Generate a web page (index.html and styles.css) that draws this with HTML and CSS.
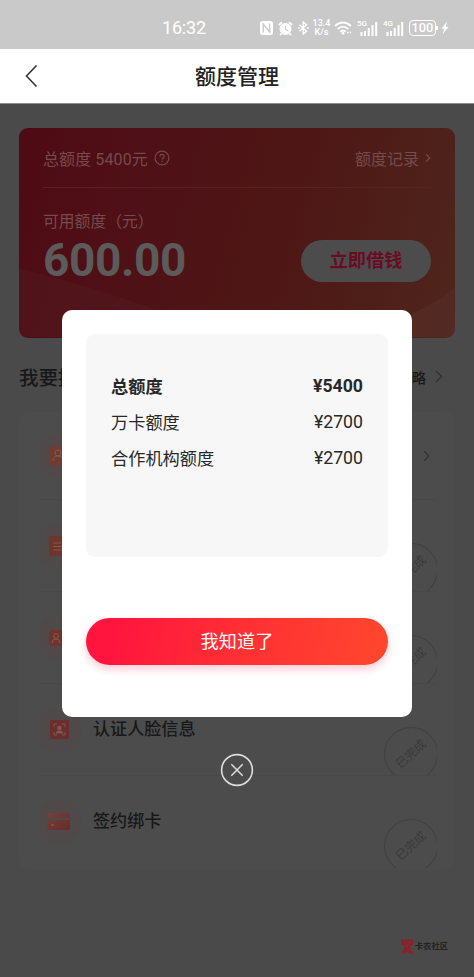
FILE: index.html
```html
<!DOCTYPE html>
<html lang="zh-CN">
<head>
<meta charset="utf-8">
<title>额度管理</title>
<link rel="stylesheet" href="styles.css">
</head>
<body>
<div class="phone">
  <div class="status">
    <span class="clock">16:32</span>
    <svg class="s-nfc" width="13" height="14" viewBox="0 0 13 14"><rect width="13" height="14" rx="2.5" fill="#fff"/><path d="M3.2 11.5V3l6.4 8V2.5" fill="none" stroke="#c9c9c9" stroke-width="1.4"/></svg>
    <svg class="s-alarm" width="15" height="15" viewBox="0 0 15 15"><circle cx="7.5" cy="8" r="6" fill="#fff"/><path d="M.8 4 4 1.2M14.2 4 11 1.2M3.5 12.5 2 14.2M11.5 12.5l1.5 1.7" stroke="#fff" stroke-width="1.8"/><path d="M7.5 4.5V8.5l2.6 1.3" fill="none" stroke="#c9c9c9" stroke-width="1.2"/></svg>
    <svg class="s-bt" width="11" height="14" viewBox="0 0 11 14"><path d="m1.5 3.8 7 6.4-3.3 2.8V1l3.3 2.8-7 6.4M.2 7h1.6M9 7h1.8" fill="none" stroke="#fff" stroke-width="1.4"/></svg>
    <span class="speed"><span>13.4</span><span>K/s</span></span>
    <svg class="s-wifi" width="18" height="14" viewBox="0 0 18 14"><path d="M1 5Q9-2 17 5M3.7 8Q9 3.4 14.3 8M6.2 10.8Q9 8.4 11.8 10.8" fill="none" stroke="#fff" stroke-width="1.7"/><circle cx="9" cy="12.3" r="1.4" fill="#fff"/><path d="M13 11.5h1.4M15.8 11.5h1.4" stroke="#fff" stroke-width="1.6"/></svg>
    <span class="signal"><b>5G</b><svg width="21" height="15" viewBox="0 0 21 15"><path d="M4.5 11v4M8 10v5M11.7 7v8M15.5 4v11M19.2 1v14" stroke="#fff" stroke-width="2"/></svg></span>
    <span class="signal"><b>4G</b><svg width="21" height="15" viewBox="0 0 21 15"><path d="M4.5 11v4M8 10v5M11.7 7v8M15.5 4v11M19.2 1v14" stroke="#fff" stroke-width="2"/></svg></span>
    <span class="battery">100</span><i class="cap"></i>
    <svg class="s-bolt" width="8" height="14" viewBox="0 0 8 14"><path d="M6 .5.5 7.8h2.7L1.5 13.5 7.7 5.8H4.8z" fill="#fff"/></svg>
  </div>
  <header class="nav">
    <svg class="back" width="13" height="24" viewBox="0 0 13 24"><path d="M11.5 1.5 1.5 12l10 10.5" fill="none" stroke="#303030" stroke-width="1.5"/></svg>
    <h1>额度管理</h1>
  </header>

  <main class="page">
    <section class="card">
      <svg class="wave" width="437" height="209" viewBox="0 0 437 209"><path d="M0 140 Q70 158 130 179 L220 209H0z" fill="#551d22" opacity=".4"/><path d="M290 209Q390 200 437 158V209z" fill="#58302a" opacity=".5"/></svg>
      <div class="card-top">
        <span class="total">总额度 5400元</span>
        <svg class="help" width="16" height="16" viewBox="0 0 16 16"><circle cx="8" cy="8" r="6.9" fill="none" stroke="#754b4e" stroke-width="1.1"/><path d="M5.9 6.5c0-2.8 4.3-2.8 4.3-.1 0 1.5-2.1 1.6-2.1 3.2M8.1 10.8v1.3" fill="none" stroke="#754b4e" stroke-width="1.2"/></svg>
        <span class="record">额度记录</span>
        <svg width="6" height="10" viewBox="0 0 6 10"><path d="m1 1.2 3.8 3.8L1 8.8" fill="none" stroke="#754b4b" stroke-width="1.2"/></svg>
      </div>
      <div class="card-main">
        <div>
          <p class="label">可用额度（元）</p>
          <p class="amount">600.00</p>
        </div>
        <span class="borrow">立即借钱</span>
      </div>
    </section>

    <div class="section-head">
      <h2>我要提额</h2>
      <span class="guide">攻略</span>
      <svg width="8" height="13" viewBox="0 0 8 13"><path d="m1 1 5.7 5.5L1 12" fill="none" stroke="#303030" stroke-width="1.2"/></svg>
    </div>

    <ul class="list">
      <li class="first">
        <span class="ico"><svg width="20" height="20" viewBox="0 0 20 20"><rect width="20" height="20" rx="3" fill="#713a32"/><circle cx="9" cy="7" r="3" fill="none" stroke="#805b54"/><path d="M4 15q0-5 5-5t5 5" fill="none" stroke="#805b54"/></svg></span>
        <svg class="go" width="7" height="12" viewBox="0 0 7 12"><path d="m1 1 5 5-5 5" fill="none" stroke="#343434" stroke-width="1.2"/></svg>
      </li>
      <li>
        <span class="ico"><svg width="20" height="20" viewBox="0 0 20 20"><rect width="20" height="20" rx="3" fill="#70332e"/><path d="M4 7h8M4 10.5h12M4 14h9" stroke="#805b54" stroke-width="1.2"/></svg></span>
        <span class="stamp">已完成</span>
      </li>
      <li>
        <span class="ico"><svg width="20" height="16" viewBox="0 0 20 16"><rect width="20" height="16" rx="2" fill="#70332e"/><circle cx="7" cy="6" r="2.4" fill="none" stroke="#805b54"/><path d="M3 13q0-4 4-4t4 4" fill="none" stroke="#805b54"/></svg></span>
        <span class="stamp">已完成</span>
      </li>
      <li>
        <span class="ico"><svg width="19" height="19" viewBox="0 0 19 19"><rect width="19" height="19" rx="2" fill="#6a2f2d"/><path d="M4 7V4h3M12 4h3v3M4 12v3h3M12 15h3v-3" fill="none" stroke="#805652"/><circle cx="9.5" cy="8" r="2.3" fill="#805652"/><path d="M5.8 13.5q0-3 3.7-3t3.7 3z" fill="#805652"/></svg></span>
        <span class="name">认证人脸信息</span>
        <span class="stamp">已完成</span>
      </li>
      <li>
        <span class="ico"><svg width="24" height="18" viewBox="0 0 24 18"><defs><linearGradient id="cc" x1="0" y1="0" x2="1" y2="1"><stop offset="0" stop-color="#734238"/><stop offset="1" stop-color="#6a292c"/></linearGradient></defs><path d="M0 5V3q0-3 3-3h18q2 0 2 3v2zM0 7h23v8q0 2-2 2H3q-3 0-3-3z" fill="url(#cc)"/><path d="M4 12h3" stroke="#8a655d"/></svg></span>
        <span class="name">签约绑卡</span>
        <span class="stamp">已完成</span>
      </li>
    </ul>

    <div class="brand">
      <svg width="14" height="15" viewBox="0 0 14 15"><path d="M1 .5h12V6h-1.6L9.5 8l4 6.5H8.8L7 12.4l-1.8 2.1H1L4.8 8 2.6 6H1z" fill="#8d2029"/><path d="M3.5 2.6h2.2v1H3.5zM8.3 2.6h2.2v1H8.3zM6.5 6h1.2v2.4H6.5z" fill="#4a4a4a"/></svg>
      <span>卡农社区</span>
    </div>
  </main>

  <div class="modal">
    <div class="box">
      <div class="line strong"><span>总额度</span><span class="money">¥5400</span></div>
      <div class="line"><span>万卡额度</span><span class="money">¥2700</span></div>
      <div class="line"><span>合作机构额度</span><span class="money">¥2700</span></div>
    </div>
    <button class="ok">我知道了</button>
  </div>
  <svg class="close" width="34" height="34" viewBox="0 0 34 34"><circle cx="17" cy="17" r="15.4" fill="none" stroke="#dedede" stroke-width="1.6"/><path d="m11.3 11.3 11.4 11.4M22.7 11.3 11.3 22.7" stroke="#dedede" stroke-width="1.5"/></svg>
</div>
</body>
</html>
```
FILE: styles.css
```css
* { box-sizing: border-box; margin: 0; padding: 0; }
body {
  width: 474px;
  height: 977px;
  overflow: hidden;
  background: #4a4a4a;
  font-family: Roboto, "Noto Sans CJK SC", sans-serif;
}
.phone { position: relative; height: 977px; display: flex; flex-direction: column; }

.status {
  height: 49px;
  flex: none;
  background: #c9c9c9;
  color: #fff;
  display: flex;
  align-items: center;
  padding: 7px 0 0 162px;
}
.clock { width: 98px; font-size: 18px; line-height: 20px; letter-spacing: -.2px; }
.s-alarm { margin-left: 5px; }
.s-bt { margin-left: 5px; }
.speed {
  width: 19px;
  margin-left: 3px;
  display: flex;
  flex-direction: column;
  align-items: center;
  font: 500 9px/9px Roboto, sans-serif;
}
.s-wifi { margin-left: 3px; }
.signal { position: relative; width: 21px; height: 15px; margin-left: 5px; }
.signal svg { display: block; }
.signal b { position: absolute; left: 0; top: -1px; font: 500 8px/8px Roboto, sans-serif; }
.battery {
  width: 27px;
  height: 16px;
  margin-left: 5px;
  border: 1px solid #fff;
  border-radius: 4px;
  text-align: center;
  font: 500 12.8px/14px Roboto, sans-serif;
}
.cap { width: 2px; height: 4px; background: #fff; margin-right: 3px; }

.nav {
  height: 55px;
  flex: none;
  background: #fff;
  border-bottom: 1px solid #8c8c8c;
  display: flex;
  align-items: center;
  padding-left: 25px;
}
.nav h1 { margin: 2px 0 0 157px; font-size: 21px; line-height: 30px; font-weight: 500; color: #222; }

.page { flex: 1; padding: 24px 19px 0; }
.card {
  position: relative;
  height: 210px;
  border-radius: 9px;
  background: linear-gradient(105deg, #4f0a14 0%, #4e1216 35%, #4e1715 60%, #4e261c 100%);
  padding: 0 24px;
  color: #754b4d;
  overflow: hidden;
}
.wave { position: absolute; left: 0; top: 0; }
.card-top {
  position: relative;
  height: 60px;
  display: flex;
  align-items: center;
  border-bottom: 1px solid #572222;
  font-size: 16px;
}
.total { letter-spacing: .1px; }
.help { margin-left: 6px; }
.record { margin-left: auto; margin-right: 6px; }
.card-main { position: relative; display: flex; justify-content: space-between; }
.label { margin-top: 22px; font-size: 15.8px; line-height: 24px; }
.amount { margin-top: 0; font-size: 46px; line-height: 52px; font-weight: 700; letter-spacing: -.4px; color: #5b5b5b; }
.borrow {
  width: 130px;
  height: 42px;
  margin-top: 52px;
  border-radius: 21px;
  background: #4c4c4c;
  color: #690c23;
  font-size: 18.2px;
  font-weight: 700;
  line-height: 41px;
  text-align: center;
}

.section-head { height: 74px; display: flex; align-items: center; padding: 3px 12px 0 0; color: #181818; }
.section-head h2 { flex: 1; font-size: 19.5px; font-weight: 500; }
.guide { font-size: 14px; font-weight: 500; margin-right: 9px; }

.list { list-style: none; height: 457px; border-radius: 9px; background: #4c4c4c; }
.list li {
  position: relative;
  height: 92px;
  margin: 0 18px 0 20px;
  display: flex;
  align-items: center;
  overflow: hidden;
  border-bottom: 1px solid #484848;
}
.list li.first { height: 88px; }
.list li:last-child { border-bottom: 0; }
.ico {
  width: 44px;
  height: 44px;
  margin-left: -2px;
  border-radius: 50%;
  background: #4f4a49;
  display: flex;
  align-items: center;
  justify-content: center;
}
.name { margin: -5px 0 0 12px; font-size: 17.1px; font-weight: 500; color: #181818; }
.go { margin-left: auto; margin-right: 7px; }
.stamp {
  position: absolute;
  right: -1px;
  top: 43px;
  width: 54px;
  height: 54px;
  border: 1px solid #404040;
  border-radius: 50%;
  color: #3a3a3a;
  font-size: 12px;
  line-height: 52px;
  text-align: center;
  transform: rotate(-42deg);
}

.brand { margin: 70px 7px 0 0; display: flex; justify-content: flex-end; align-items: center; gap: 1px; color: #222; font-size: 8.3px; line-height: 15px; font-weight: 700; }

.modal {
  position: absolute;
  left: 62px;
  top: 310px;
  width: 350px;
  height: 407px;
  border-radius: 10px;
  background: #fff;
  padding: 24px;
}
.box { height: 223px; border-radius: 9px; background: #f7f7f7; padding: 33px 25px 0; }
.line { height: 36px; display: flex; justify-content: space-between; align-items: center; font-size: 17.2px; color: #282828; }
.line.strong { font-weight: 700; }
.money { font-size: 17.7px; padding-top: 1px; }
.ok {
  display: block;
  width: 302px;
  height: 47px;
  margin-top: 61px;
  border: 0;
  border-radius: 24px;
  background: linear-gradient(105deg, #ff153e 10%, #ff2f34 50%, #ff452e 95%);
  box-shadow: 0 4px 9px rgba(255, 30, 70, .24);
  color: #fff;
  font: 400 18.2px/44px Roboto, "Noto Sans CJK SC", sans-serif;
}
.close { position: absolute; left: 220px; top: 753px; }
```
